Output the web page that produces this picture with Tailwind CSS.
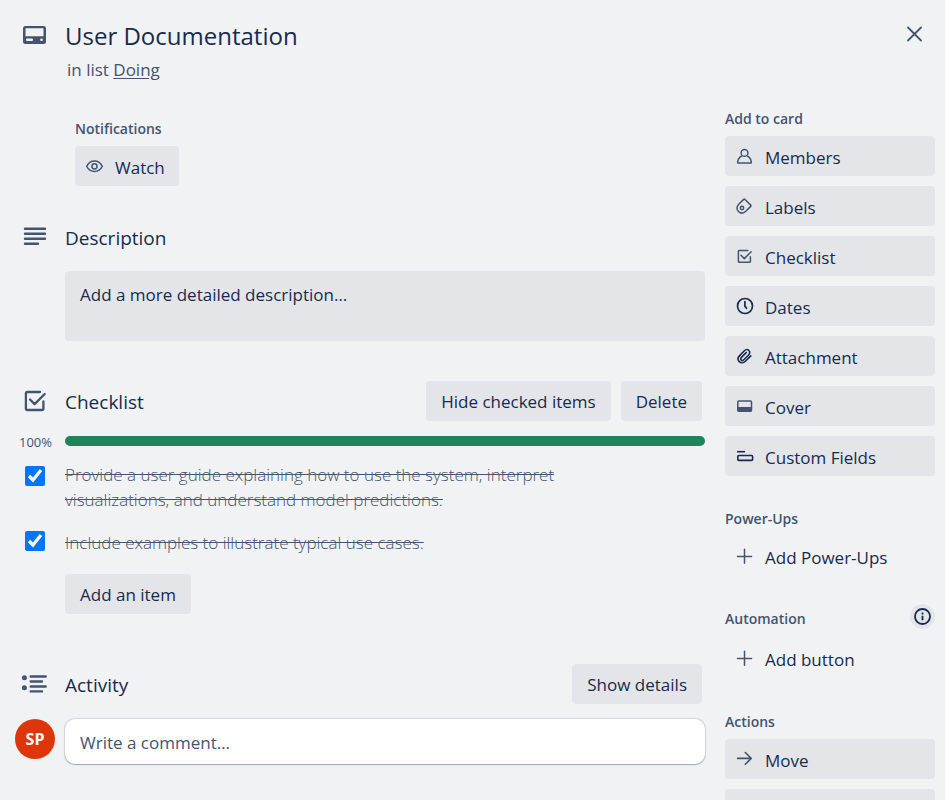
<!DOCTYPE html>
<html lang="en">
<head>
<meta charset="utf-8">
<meta name="viewport" content="width=device-width, initial-scale=1">
<title>User Documentation</title>
<script src="https://cdn.jsdelivr.net/npm/@tailwindcss/browser@4"></script>
</head>
<body class="h-screen overflow-hidden bg-[#f1f2f4] font-['Open_Sans','Noto_Sans',sans-serif] text-[17px] leading-[25px] text-[#172b4d]">
<div class="flex h-full flex-col overflow-hidden">

  <header class="flex items-start pt-5 pr-[15px]">
    <svg class="ml-5 size-[30px] shrink-0 text-[#44546f]" viewBox="0 0 30 30" fill="none" aria-hidden="true">
      <path fill="currentColor" fill-rule="evenodd" d="M5.5 6h18A2.5 2.5 0 0 1 26 8.500v13a2.500 2.500 0 0 1-2.500 2.500h-18A2.500 2.500 0 0 1 3 21.500v-13A2.500 2.500 0 0 1 5.500 6zM5.500 8.300h18v7.900h-18zM7.200 18.400a1.200 1.200 0 0 0 0 2.500h4.600a1.200 1.200 0 0 0 0-2.500zM21.400 18.400a1.200 1.200 0 0 0 0 2.500h.2a1.200 1.200 0 0 0 0-2.500z"/>
    </svg>
    <div class="ml-[15px] flex-1">
      <h1 class="text-2xl leading-8 font-medium">User Documentation</h1>
      <p class="mt-[5px] ml-0.5 text-[#44546f]">in list <a href="#" class="underline underline-offset-2">Doing</a></p>
    </div>
    <button type="button" aria-label="Close" class="flex size-[30px] items-center justify-center text-[#44546f]">
      <svg class="size-5" viewBox="0 0 20 20" fill="none" stroke="currentColor" stroke-width="1.8" stroke-linecap="round"><path d="M3 2.500l13 13M16 2.500l-13 13"/></svg>
    </button>
  </header>

  <div class="flex flex-1 items-start gap-5 pr-[10px] pt-6">
    <main class="min-w-0 flex-1 pt-[10px]">
      <section class="ml-[75px]">
        <h2 class="text-sm leading-[25px] font-semibold text-[#44546f]">Notifications</h2>
        <button type="button" class="mt-[5px] flex h-10 items-center gap-[10px] rounded bg-[#e4e5e9] pr-[14px] pl-[10px] font-medium">
          <svg class="size-5 text-[#44546f]" viewBox="0 0 20 20" fill="none" stroke="currentColor" stroke-width="1.500"><path d="M1.700 10.300C3.300 7 6.300 5.100 9.500 5.100s6.200 1.900 7.800 5.200C15.700 13.700 12.700 15.500 9.500 15.500S3.300 13.700 1.700 10.300z"/><circle cx="9.500" cy="10.300" r="2.600"/></svg>
          <span class="pt-0.5">Watch</span>
        </button>
      </section>

      <section class="mt-10">
        <div class="flex h-[25px] items-center">
          <svg class="ml-5 size-[30px] text-[#44546f]" viewBox="0 0 30 30" fill="none" stroke="currentColor" stroke-width="2.400" stroke-linecap="round" aria-hidden="true"><path d="M5 4.800h20M5 9.800h20M5 14.800h20M5 19.800h13"/></svg>
          <h2 class="ml-[15px] text-[19px] font-medium">Description</h2>
        </div>
        <button type="button" class="mt-5 ml-[65px] flex h-[70px] w-[calc(100%-65px)] items-start rounded bg-[#e4e5e9] px-[15px] py-[11px] font-medium">Add a more detailed description…</button>
      </section>

      <section class="mt-10">
        <div class="flex h-10 items-center pr-[3px]">
          <svg class="ml-5 size-[30px] text-[#44546f]" viewBox="0 0 30 30" fill="none" stroke="currentColor" stroke-width="2.300" stroke-linecap="round" stroke-linejoin="round" aria-hidden="true"><path d="M20 6H7.500A1.600 1.600 0 0 0 5.900 7.600v14.800A1.600 1.600 0 0 0 7.500 24h14.300a1.600 1.600 0 0 0 1.600-1.600v-6.900M10 13.500l4.600 4.600L24.700 8"/></svg>
          <h2 class="ml-[15px] flex-1 pt-[3px] text-[19px] font-medium">Checklist</h2>
          <button type="button" class="h-10 rounded bg-[#e4e5e9] px-[15px] font-medium">Hide checked items</button>
          <button type="button" class="ml-[10px] h-10 rounded bg-[#e4e5e9] px-[15px] font-medium">Delete</button>
        </div>
        <div class="mt-[10px] flex h-5 items-center">
          <span class="w-[52px] pt-0.5 text-right text-[13px] font-normal text-[#44546f]">100%</span>
          <div class="ml-[13px] h-[10px] flex-1 rounded-full bg-[#1f845a]" role="progressbar" aria-label="Checklist progress" aria-valuenow="100"></div>
        </div>
        <ul class="mt-[11px] text-[#44546f]">
          <li class="flex items-start">
            <input id="i1" type="checkbox" checked class="mt-1 ml-[25px] size-5 shrink-0">
            <label for="i1" class="ml-5 max-w-[520px] font-light line-through">Provide a user guide explaining how to use the system, interpret visualizations, and understand model predictions.</label>
          </li>
          <li class="mt-[15px] flex items-start">
            <input id="i2" type="checkbox" checked class="mt-1 ml-[25px] size-5 shrink-0">
            <label for="i2" class="ml-5 mt-[3px] max-w-[520px] font-light line-through">Include examples to illustrate typical use cases.</label>
          </li>
        </ul>
        <button type="button" class="mt-[19px] ml-[65px] h-10 rounded bg-[#e4e5e9] px-[15px] font-medium">Add an item</button>
      </section>

      <section class="mt-[50px]">
        <div class="flex h-10 items-center pr-[3px]">
          <svg class="ml-5 size-[30px] text-[#44546f]" viewBox="0 0 30 30" fill="none" stroke="currentColor" stroke-width="2.400" stroke-linecap="round" aria-hidden="true"><path d="M10.700 7.500h15M10.700 12.500h11.300M10.700 17.500h15M10.700 22.400h11.300"/><g fill="currentColor" stroke="none"><circle cx="4.400" cy="8.700" r="2.500"/><circle cx="4.400" cy="18.700" r="2.500"/></g></svg>
          <h2 class="ml-[15px] flex-1 pt-[3px] text-[19px] font-medium">Activity</h2>
          <button type="button" class="h-10 rounded bg-[#e4e5e9] px-[15px] font-medium">Show details</button>
        </div>
        <div class="mt-[15px] flex items-start">
          <span class="ml-[15px] flex size-10 items-center justify-center rounded-full bg-[#de350b] text-base font-bold text-white">SP</span>
          <input type="text" aria-label="Write a comment" placeholder="Write a comment…" class="ml-[10px] h-[45px] min-w-0 flex-1 rounded-[10px] bg-white px-[15px] pt-0.5 shadow-[0_1px_1px_#091e4240,0_0_1px_1px_#091e4221] placeholder:text-[#44546f]">
        </div>
      </section>
    </main>

    <aside class="w-[210px] shrink-0">
      <h2 class="text-sm leading-[25px] font-semibold text-[#44546f]">Add to card</h2>
      <div class="mt-[5px] flex flex-col gap-[10px]">
        <button type="button" class="flex h-10 items-center gap-[10px] rounded bg-[#e4e5e9] px-[10px] font-medium"><svg class="size-5 shrink-0 text-[#44546f]" viewBox="0 0 20 20" fill="none" stroke="currentColor" stroke-width="1.500" stroke-linejoin="round"><circle cx="9.500" cy="6.900" r="3.400"/><path d="M6.700 9.800C4.300 11.200 2.800 13.500 2.600 16.500c0 .3.200.5.500.5h12.800c.3 0 .5-.2.500-.5-.2-3-1.700-5.300-4.100-6.700"/></svg><span class="pt-0.5">Members</span></button>
        <button type="button" class="flex h-10 items-center gap-[10px] rounded bg-[#e4e5e9] px-[10px] font-medium"><svg class="size-5 shrink-0 text-[#44546f]" viewBox="0 0 20 20" fill="none" stroke="currentColor" stroke-width="1.500" stroke-linejoin="round"><path d="M8.700 3.400a.9.9 0 0 1 1.300 0l5.700 5.700a.9.9 0 0 1 0 1.300l-4.900 4.900C8.500 17.500 5.500 17.400 3.500 15.500s-2-5.200.2-7.300z"/><circle cx="7" cy="12" r="1.700"/></svg><span class="pt-0.5">Labels</span></button>
        <button type="button" class="flex h-10 items-center gap-[10px] rounded bg-[#e4e5e9] px-[10px] font-medium"><svg class="size-5 shrink-0 text-[#44546f]" viewBox="0 0 20 20" fill="none" stroke="currentColor" stroke-width="1.500" stroke-linecap="round" stroke-linejoin="round"><path d="M12.800 4.500H4.300a.9.900 0 0 0-.9.900v10a.9.900 0 0 0 .9.900h10.200a.9.900 0 0 0 .9-.9v-4.700M6 9.300l3.300 3.300 6.800-6.800"/></svg><span class="pt-0.5">Checklist</span></button>
        <button type="button" class="flex h-10 items-center gap-[10px] rounded bg-[#e4e5e9] px-[10px] font-medium"><svg class="size-5 shrink-0" viewBox="0 0 20 20" fill="none" stroke="currentColor" stroke-width="1.700" stroke-linecap="round"><circle cx="10" cy="10" r="7.500"/><path d="M9.900 5.500v4.600l1.600 2.200"/></svg><span class="pt-0.5">Dates</span></button>
        <button type="button" class="flex h-10 items-center gap-[10px] rounded bg-[#e4e5e9] px-[10px] font-medium"><svg class="size-5 shrink-0" viewBox="0 0 20 20" fill="none" stroke="currentColor" stroke-width="1.600" stroke-linecap="round" stroke-linejoin="round"><path d="M15.800 9.900l-5.400 5.400c-2 2-4.600 1.800-6.100.3s-1.700-4 .3-6l4.800-4.800c1.500-1.500 3.400-1.400 4.500-.3s1.200 3-.3 4.500l-4.800 4.800c-.9.900-2 .8-2.600.2s-.7-1.700.2-2.600l4.800-4.800"/></svg><span class="pt-0.5">Attachment</span></button>
        <button type="button" class="flex h-10 items-center gap-[10px] rounded bg-[#e4e5e9] px-[10px] font-medium"><svg class="size-5 shrink-0 text-[#44546f]" viewBox="0 0 20 20" fill="none" stroke="currentColor" stroke-width="1.500"><rect x="2.800" y="5" width="13.700" height="10.300" rx="1"/><path fill="currentColor" stroke="none" d="M2.500 11h14v4.500h-14z"/></svg><span class="pt-0.5">Cover</span></button>
        <button type="button" class="flex h-10 items-center gap-[10px] rounded bg-[#e4e5e9] px-[10px] font-medium"><svg class="size-5 shrink-0" viewBox="0 0 20 20" fill="none" stroke="currentColor" stroke-width="1.600"><path d="M2 5.700h8"/><rect x="2.800" y="9.500" width="14.800" height="4.900" rx="1"/></svg><span class="pt-0.5">Custom Fields</span></button>
      </div>

      <h2 class="mt-[30px] text-sm leading-[25px] font-semibold text-[#44546f]">Power-Ups</h2>
      <button type="button" class="mt-[5px] flex h-10 w-full items-center gap-[10px] rounded px-[10px] font-medium"><svg class="size-5 shrink-0 text-[#44546f]" viewBox="0 0 20 20" fill="none" stroke="currentColor" stroke-width="1.500" stroke-linecap="round"><path d="M9.500 3.300v14M2.500 10.500h14"/></svg><span class="pt-0.5">Add Power-Ups</span></button>

      <div class="mt-[28px] flex h-[25px] items-center justify-between">
        <h2 class="pt-1 text-sm leading-[25px] font-semibold text-[#44546f]">Automation</h2>
        <button type="button" aria-label="About automation" class="flex size-[25px] items-center justify-center rounded-full bg-[#e4e5e9]">
          <svg class="size-5" viewBox="0 0 20 20" fill="none" stroke="currentColor" stroke-width="1.800"><circle cx="9.500" cy="9.500" r="7.500"/><path d="M9.500 8.800v4.500M9.500 5.500v2"/></svg>
        </button>
      </div>
      <button type="button" class="mt-[9px] flex h-10 w-full items-center gap-[10px] rounded px-[10px] font-medium"><svg class="size-5 shrink-0 text-[#44546f]" viewBox="0 0 20 20" fill="none" stroke="currentColor" stroke-width="1.500" stroke-linecap="round"><path d="M9.500 3.300v14M2.500 10.500h14"/></svg><span class="pt-0.5">Add button</span></button>

      <h2 class="mt-[31px] text-sm leading-[25px] font-semibold text-[#44546f]">Actions</h2>
      <div class="mt-[5px] flex flex-col gap-[10px]">
        <button type="button" class="flex h-10 items-center gap-[10px] rounded bg-[#e4e5e9] px-[10px] font-medium"><svg class="size-5 shrink-0 text-[#44546f]" viewBox="0 0 20 20" fill="none" stroke="currentColor" stroke-width="1.600" stroke-linecap="round" stroke-linejoin="round"><path d="M2.600 9.400h13.600M10.300 3.500l5.900 5.900-5.900 5.900"/></svg><span class="pt-0.5">Move</span></button>
        <button type="button" aria-label="More" class="h-10 rounded bg-[#e4e5e9]"></button>
      </div>
    </aside>
  </div>
</div>
</body>
</html>
